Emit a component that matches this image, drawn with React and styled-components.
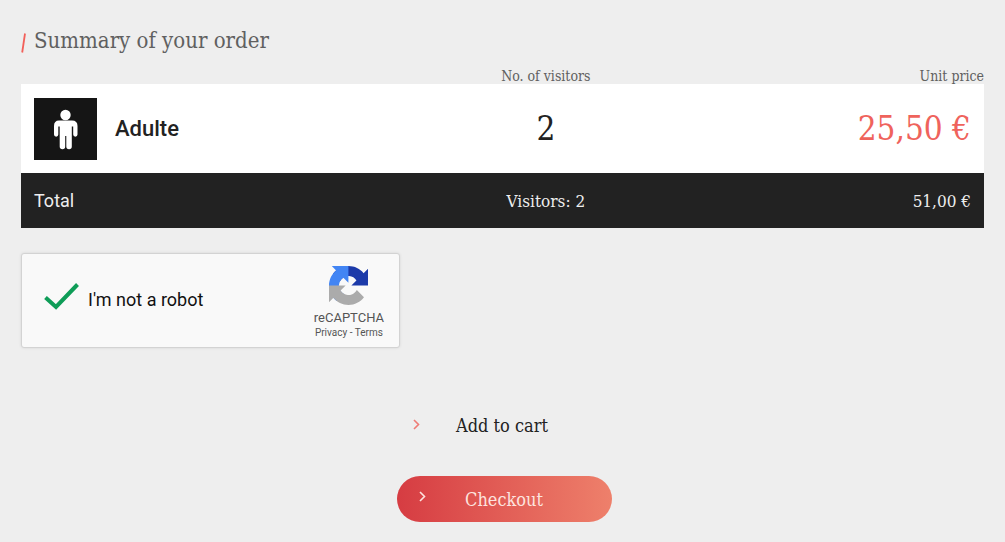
import React, { useState } from 'react';
import styled, { createGlobalStyle } from 'styled-components';

const slab = '"Roboto Slab", "DejaVu Serif Condensed", "DejaVu Serif", serif';

const GlobalStyle = createGlobalStyle`
  * {
    box-sizing: border-box;
  }
  body {
    margin: 0;
    background: #eeeeee;
    color: #222222;
    font-family: Roboto, sans-serif;
  }
`;

const Page = styled.main`
  padding: 25px 21px 20px;
`;

const Heading = styled.h1`
  display: flex;
  align-items: center;
  gap: 8px;
  margin: 0 0 11px;
  font-family: ${slab};
  font-size: 22px;
  font-weight: 300;
  line-height: 32px;
  color: #606060;
`;

const Slash = styled.svg`
  width: 5px;
  height: 20px;
  margin-top: 4px;
`;

const OrderTable = styled.table`
  width: 100%;
  table-layout: fixed;
  border-collapse: collapse;
`;

const HeadCell = styled.th`
  width: ${({ $width }) => $width};
  padding: 0;
  font-family: ${slab};
  font-size: 14px;
  font-weight: 300;
  line-height: 16px;
  color: #606060;
  text-align: ${({ $align }) => $align || 'left'};
`;

const ItemRow = styled.tr`
  height: 89px;
  background: #ffffff;
`;

const TotalRow = styled.tr`
  height: 55px;
  background: #222222;
  color: #eeeeee;
`;

const Cell = styled.td`
  padding: 0 13px;
  font-family: ${slab};
  font-size: ${({ $large }) => ($large ? '33px' : '17px')};
  font-weight: 300;
  color: ${({ $accent }) => ($accent ? '#ef635c' : 'inherit')};
  text-align: ${({ $align }) => $align || 'left'};
`;

const TotalLabel = styled.th`
  padding: 0 13px;
  font-size: 18px;
  font-weight: 400;
  text-align: left;
`;

const Visitor = styled.div`
  display: flex;
  align-items: center;
  gap: 18px;
  font-family: Roboto, sans-serif;
  font-size: 22px;
  font-weight: 500;
`;

const VisitorIcon = styled.svg`
  width: 63px;
  height: 62px;
  background: #151515;
`;

const Captcha = styled.section`
  display: flex;
  align-items: center;
  justify-content: space-between;
  max-width: 379px;
  min-height: 95px;
  margin-top: 25px;
  padding: 10px 15px 6px 21px;
  background: #f9f9f9;
  border: 1px solid #d3d3d3;
  border-radius: 3px;
  box-shadow: 0 0 3px rgba(0, 0, 0, 0.1);
`;

const RobotLabel = styled.label`
  display: flex;
  align-items: center;
  gap: 8px;
  margin-bottom: 6px;
  font-size: 18px;
  color: #111111;
  cursor: pointer;
`;

const CheckWrap = styled.span`
  display: grid;
  width: 37px;
  height: 28px;
  margin-bottom: 8px;

  > * {
    grid-area: 1 / 1;
  }
`;

const RobotCheck = styled.input`
  appearance: none;
  margin: 0;
  border-radius: 2px;

  &:not(:checked) {
    border: 2px solid #c1c1c1;
  }
  &:not(:checked) + svg {
    visibility: hidden;
  }
`;

const CheckMark = styled.svg`
  width: 100%;
  height: 100%;
  pointer-events: none;
`;

const Badge = styled.div`
  display: flex;
  flex-direction: column;
  align-items: center;
  font-size: 13px;
  line-height: 16px;
  color: #555555;
`;

const BadgeLogo = styled.svg`
  width: 39px;
  height: 39px;
  margin-bottom: 5px;
`;

const BadgeLinks = styled.div`
  font-size: 10px;
  line-height: 14px;

  a {
    color: inherit;
    text-decoration: none;
  }
`;

const Actions = styled.div`
  display: flex;
  flex-direction: column;
  align-items: center;
  gap: 28px;
  margin-top: 54px;
  padding-left: 4px;
`;

const ActionButton = styled.button`
  display: flex;
  align-items: center;
  width: 215px;
  height: 46px;
  padding: ${({ $primary }) => ($primary ? '0 22px' : '0 16px')};
  border: 0;
  border-radius: 23px;
  background: ${({ $primary }) =>
    $primary ? 'linear-gradient(90deg, #d63c42, #ee806b)' : 'transparent'};
  color: ${({ $primary }) => ($primary ? '#fde3df' : '#222222')};
  font-family: ${slab};
  font-size: 18px;
  cursor: pointer;

  svg {
    width: 7px;
    height: 11px;
    margin-right: ${({ $primary }) => ($primary ? '39px' : '36px')};
    margin-bottom: ${({ $primary }) => ($primary ? '6px' : '2px')};
    color: ${({ $primary }) => ($primary ? '#fde3df' : '#ef7b75')};
  }
`;

const Chevron = () => (
  <svg viewBox="0 0 7 11" fill="none" stroke="currentColor" strokeWidth="1.6" aria-hidden="true">
    <path d="M1 1l4.5 4.5L1 10" />
  </svg>
);

const Person = () => (
  <VisitorIcon viewBox="0 0 63 62" fill="#ffffff" aria-hidden="true">
    <circle cx="31.5" cy="17" r="5.2" />
    <path d="M25 22.5H38Q43.5 22.5 43.5 28V36.5A2 2 0 0 1 39.2 36.5V28.5H37.8V48.5A2.6 2.6 0 0 1 32.3 48.5V38H31.2V48.5A2.6 2.6 0 0 1 25.7 48.5V28.5H24.3V36.5A2 2 0 0 1 20 36.5V28Q20 22.5 25 22.5Z" />
  </VisitorIcon>
);

const RecaptchaLogo = () => (
  <BadgeLogo viewBox="0 0 64 64" aria-hidden="true">
    <path fill="#1c3aa9" d="M64 31.955l-.033-1.37V4.687l-7.16 7.16C50.948 4.674 42.033.093 32.05.093c-10.4 0-19.622 4.96-25.458 12.64l11.736 11.86a15.55 15.55 0 0 1 4.754-5.334c2.05-1.6 4.952-2.906 8.968-2.906.485 0 .86.057 1.135.163 4.976.393 9.288 3.14 11.828 7.124l-8.307 8.307L64 31.953" />
    <path fill="#4285f4" d="M31.862.094l-1.37.033H4.594l7.16 7.16C4.58 13.147 0 22.06 0 32.046c0 10.4 4.96 19.622 12.64 25.458L24.5 45.768a15.55 15.55 0 0 1-5.334-4.754c-1.6-2.05-2.906-4.952-2.906-8.968 0-.485.057-.86.163-1.135.393-4.976 3.14-9.288 7.124-11.828l8.307 8.307L31.86.095" />
    <path fill="#ababab" d="M.001 32.045l.033 1.37v25.898l7.16-7.16c5.86 7.173 14.774 11.754 24.76 11.754 10.4 0 19.622-4.96 25.458-12.64l-11.736-11.86a15.55 15.55 0 0 1-4.754 5.334c-2.05 1.6-4.952 2.906-8.968 2.906-.485 0-.86-.057-1.135-.163-4.976-.393-9.288-3.14-11.828-7.124l8.307-8.307c-10.522.04-22.4.066-27.295-.005" />
  </BadgeLogo>
);

const App = () => {
  const [verified, setVerified] = useState(true);

  return (
    <>
      <GlobalStyle />
      <Page>
        <Heading>
          <Slash viewBox="0 0 5 20" aria-hidden="true">
            <path d="M4 0.5L1.2 19.5" stroke="#f2605a" strokeWidth="1.8" />
          </Slash>
          Summary of your order
        </Heading>

        <OrderTable>
          <thead>
            <tr>
              <HeadCell $width="42%" aria-label="Visitor type" />
              <HeadCell $width="25%" $align="center">No. of visitors</HeadCell>
              <HeadCell $width="33%" $align="right">Unit price</HeadCell>
            </tr>
          </thead>
          <tbody>
            <ItemRow>
              <Cell>
                <Visitor>
                  <Person />
                  Adulte
                </Visitor>
              </Cell>
              <Cell $large $align="center">2</Cell>
              <Cell $large $accent $align="right">25,50 €</Cell>
            </ItemRow>
          </tbody>
          <tfoot>
            <TotalRow>
              <TotalLabel scope="row">Total</TotalLabel>
              <Cell $align="center">Visitors: 2</Cell>
              <Cell $align="right">51,00 €</Cell>
            </TotalRow>
          </tfoot>
        </OrderTable>

        <Captcha>
          <RobotLabel>
            <CheckWrap>
              <RobotCheck
                type="checkbox"
                checked={verified}
                onChange={(e) => setVerified(e.target.checked)}
              />
              <CheckMark viewBox="0 0 37 28" fill="none" aria-hidden="true">
                <path d="M2.5 15.5L13 25L34.5 2.5" stroke="#0f9d58" strokeWidth="4" />
              </CheckMark>
            </CheckWrap>
            I'm not a robot
          </RobotLabel>
          <Badge>
            <RecaptchaLogo />
            reCAPTCHA
            <BadgeLinks>
              <a href="#privacy">Privacy</a> - <a href="#terms">Terms</a>
            </BadgeLinks>
          </Badge>
        </Captcha>

        <Actions>
          <ActionButton type="button">
            <Chevron />
            Add to cart
          </ActionButton>
          <ActionButton type="button" $primary>
            <Chevron />
            Checkout
          </ActionButton>
        </Actions>
      </Page>
    </>
  );
};

export default App;
